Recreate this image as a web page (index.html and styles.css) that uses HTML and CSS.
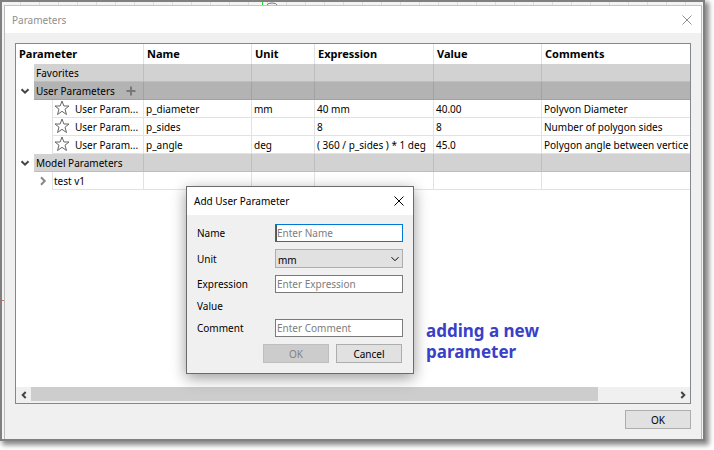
FILE: index.html
```html
<!DOCTYPE html>
<html lang="en">
<head>
<meta charset="utf-8">
<title>Parameters</title>
<link rel="stylesheet" href="styles.css">
</head>
<body>
<svg class="defs" aria-hidden="true">
  <symbol id="close" viewBox="0 0 10 10"><path d="M.5 .5l9 9M9.500 .5l-9 9"/></symbol>
  <symbol id="down" viewBox="0 0 10 10"><path d="M1.500 3.200L5 6.700L8.500 3.200"/></symbol>
  <symbol id="right" viewBox="0 0 10 10"><path d="M3 1.300L6.700 5L3 8.700"/></symbol>
  <symbol id="left" viewBox="0 0 10 10"><path d="M6.700 2L3.700 5L6.700 8"/></symbol>
  <symbol id="star" viewBox="0 0 16 16"><path d="M8 1L9.900 6H15L11 9.200L12.500 14.500L8 11.300L3.500 14.500L5 9.200L1 6H6.100Z"/></symbol>
</svg>
<div class="frame">
  <main class="window">
    <header class="titlebar">
      <h1>Parameters</h1>
      <button class="close" aria-label="Close"><svg><use href="#close"/></svg></button>
    </header>
    <div class="body">
      <div class="panel">
        <table class="tree">
          <colgroup><col class="c-param"><col class="c-name"><col class="c-unit"><col class="c-expr"><col class="c-value"><col></colgroup>
          <thead>
            <tr><th>Parameter</th><th>Name</th><th>Unit</th><th>Expression</th><th>Value</th><th>Comments</th></tr>
          </thead>
          <tbody>
            <tr class="group">
              <td class="node"><div><span class="gutter"></span><span class="label">Favorites</span></div></td><td></td><td></td><td></td><td></td><td></td>
            </tr>
            <tr class="group selected">
              <td class="node"><div><button class="gutter" aria-label="Collapse User Parameters"><svg><use href="#down"/></svg></button><span class="label">User Parameters<button class="add" aria-label="Add parameter"><svg viewBox="0 0 10 10"><path d="M5 .5v9M.5 5h9"/></svg></button></span></div></td><td></td><td></td><td></td><td></td><td></td>
            </tr>
            <tr>
              <td class="node"><div><span class="gutter"></span><span class="gutter"></span><span class="label leaf"><svg class="star"><use href="#star"/></svg>User Param...</span></div></td><td>p_diameter</td><td>mm</td><td>40 mm</td><td>40.00</td><td>Polyvon Diameter</td>
            </tr>
            <tr>
              <td class="node"><div><span class="gutter"></span><span class="gutter"></span><span class="label leaf"><svg class="star"><use href="#star"/></svg>User Param...</span></div></td><td>p_sides</td><td></td><td>8</td><td>8</td><td>Number of polygon sides</td>
            </tr>
            <tr>
              <td class="node"><div><span class="gutter"></span><span class="gutter"></span><span class="label leaf"><svg class="star"><use href="#star"/></svg>User Param...</span></div></td><td>p_angle</td><td>deg</td><td>( 360 / p_sides ) * 1 deg</td><td>45.0</td><td>Polygon angle between vertice</td>
            </tr>
            <tr class="group">
              <td class="node"><div><button class="gutter" aria-label="Collapse Model Parameters"><svg><use href="#down"/></svg></button><span class="label">Model Parameters</span></div></td><td></td><td></td><td></td><td></td><td></td>
            </tr>
            <tr>
              <td class="node"><div><span class="gutter"></span><button class="gutter closed" aria-label="Expand test v1"><svg><use href="#right"/></svg></button><span class="label leaf">test v1</span></div></td><td></td><td></td><td></td><td></td><td></td>
            </tr>
          </tbody>
        </table>
        <div class="scrollbar">
          <button aria-label="Scroll left"><svg><use href="#left"/></svg></button>
          <div class="track"><div class="thumb"></div></div>
          <button aria-label="Scroll right"><svg class="flip"><use href="#left"/></svg></button>
        </div>
      </div>
      <footer><button class="btn">OK</button></footer>
    </div>
  </main>
  <section class="dialog" role="dialog" aria-labelledby="dialog-title">
    <header class="titlebar">
      <h2 id="dialog-title">Add User Parameter</h2>
      <button class="close" aria-label="Close"><svg><use href="#close"/></svg></button>
    </header>
    <form>
      <label for="name">Name</label>
      <div class="field active"><input id="name" type="text" placeholder="Enter Name"></div>
      <label for="unit">Unit</label>
      <div class="field select"><select id="unit"><option>mm</option></select><svg><use href="#down"/></svg></div>
      <label for="expression">Expression</label>
      <div class="field"><input id="expression" type="text" placeholder="Enter Expression"></div>
      <span class="value">Value</span>
      <label for="comment">Comment</label>
      <div class="field"><input id="comment" type="text" placeholder="Enter Comment"></div>
      <div class="actions"><button class="btn" type="button" disabled>OK</button><button class="btn" type="button">Cancel</button></div>
    </form>
  </section>
  <p class="note">adding a new<br>parameter</p>
  <span class="axis"></span>
  <span class="axis-x"></span>
  <svg class="origin" viewBox="0 0 12 3"><path d="M1 3Q2 1 6 1T11 3"/></svg>
</div>
</body>
</html>
```
FILE: styles.css
```css
* { box-sizing: border-box; }

body {
  margin: 0;
  height: 100vh;
  padding: 0 9px 9px 0;
  background: #fff;
  color: #000;
  font: 10px/18px "Noto Sans", "Open Sans", sans-serif;
  overflow: hidden;
}

.defs { position: absolute; width: 0; height: 0; }

button, input, select { font: inherit; color: inherit; padding: 0; margin: 0; }
svg { display: block; width: 10px; height: 10px; fill: none; stroke: currentColor; stroke-width: 1; }

.frame {
  position: relative;
  height: 100%;
  border: 2px solid #808080;
  padding: 3px 1px 0 2px;
  background: repeating-linear-gradient(90deg, #f3f3f3 0 18px, #dcdcdc 18px 19px);
  box-shadow: 3px 3px 5px 1px #888;
}

.window {
  height: 100%;
  display: flex;
  flex-direction: column;
  background: #f0f0f0;
  border-left: 1px solid #bbb;
  border-right: 1px solid #bbb;
  border-top: 1px solid #c4c4c4;
}

.titlebar {
  display: flex;
  align-items: center;
  justify-content: space-between;
  height: 28px;
  padding: 0 9px 0 7px;
  background: #fff;
}
.window > .titlebar { height: 27px; color: #8f8f8f; }
h1, h2 { margin: 0; font-size: 10px; font-weight: 400; }
.close { border: 0; background: none; }

.body { flex: 1; display: flex; flex-direction: column; padding: 10px; }

.panel {
  flex: 1;
  display: flex;
  flex-direction: column;
  border: 1px solid #828790;
  background: #fff;
  overflow: hidden;
}

.tree { width: 100%; table-layout: fixed; border-collapse: separate; border-spacing: 0; }
.c-param { width: 128px; }
.c-name { width: 108px; }
.c-unit { width: 63px; }
.c-expr { width: 119px; }
.c-value { width: 108px; }

th, td {
  padding: 0 0 0 2px;
  text-align: left;
  white-space: nowrap;
  overflow: hidden;
  border-right: 1px solid #e2e2e2;
}
th { height: 20px; padding-left: 3px; font-size: 11px; line-height: 20px; }
td { height: 18px; padding-top: 2px; line-height: 15px; border-bottom: 1px solid #e2e2e2; }
th:last-child, td:last-child { border-right: 0; }
.group td { background: #d2d2d2; border-color: #bebebe; }
.selected td { background: #b3b3b3; border-color: #a2a2a2; }

.tree .node { padding: 0; border-bottom: 0; background: #fff; }
.node div { display: flex; height: 18px; }
.gutter { flex: 0 0 18px; display: grid; place-items: center; border: 0; background: none; color: #444; }
.gutter svg { stroke-width: 2; }
.closed { color: #888; }
.label { flex: 1; display: flex; align-items: center; padding: 2px 0 0 2px; border-bottom: 1px solid #bebebe; background: #d2d2d2; }
.selected .label { background: #b3b3b3; border-color: #a2a2a2; }
.leaf { padding-left: 1px; background: #fff; border-color: #e2e2e2; border-left: 1px solid #e2e2e2; }
.label .star { width: 16px; height: 16px; margin: -3px 5px 0 0; color: #666; }
.add { margin: -2px 0 0 11px; border: 0; background: none; color: #777; }
.add svg { stroke-width: 2; }

.scrollbar { display: flex; height: 16px; margin-top: auto; padding: 0 0 1px; background: #f0f0f0; }
.scrollbar button { flex: 0 0 15px; display: grid; place-items: center; border: 0; background: none; color: #444; }
.scrollbar svg { stroke-width: 2; }
.scrollbar .flip { transform: scaleX(-1); }
.track { flex: 1; }
.thumb { width: 88%; height: 14px; background: #cdcdcd; }

footer { display: flex; justify-content: flex-end; padding-top: 6px; }

.btn { width: 66px; height: 19px; border: 1px solid #adadad; background: #e1e1e1; line-height: 16px; }
.btn:disabled { background: #ccc; border-color: #bfbfbf; color: #838383; }

.dialog {
  position: absolute;
  left: 184px;
  top: 184px;
  width: 228px;
  border: 1px solid #6b6b6b;
  background: #f0f0f0;
  box-shadow: 0 4px 14px rgba(0, 0, 0, .4);
}

form {
  display: grid;
  grid-template-columns: 78px minmax(0, 1fr);
  row-gap: 7px;
  align-items: center;
  padding: 9px 10px 10px;
}

.field { display: flex; height: 18px; border: 1px solid #7a7a7a; background: #fff; }
.field input, .field select { flex: 1; min-width: 0; height: 16px; border: 0; outline: 0; background: none; padding: 0 1px; }
.field input::placeholder { color: #7d7d7d; opacity: 1; }
.active { border-color: #0078d7; }
.active input { border-left: 1px solid #555; padding: 0; }
.select { height: 19px; align-items: center; background: #e1e1e1; border-color: #adadad; padding-right: 2px; }
.field select { appearance: none; padding-left: 2px; }

.value { grid-column: 1 / -1; line-height: 12px; }
.actions { grid-column: 1 / -1; display: flex; justify-content: flex-end; gap: 7px; padding-right: 1px; }

.note {
  position: absolute;
  left: 424px;
  top: 318px;
  margin: 0;
  color: #3a3fc8;
  font: 700 17px/21px "Noto Sans", sans-serif;
}

.axis { position: absolute; left: 260px; top: 0; width: 1px; height: 3px; background: #3c3; }
.axis-x { position: absolute; left: 0; top: 298px; width: 2px; height: 1px; background: #e66; }
.origin { position: absolute; left: 264px; top: 0; width: 12px; height: 3px; color: #777; }
```
